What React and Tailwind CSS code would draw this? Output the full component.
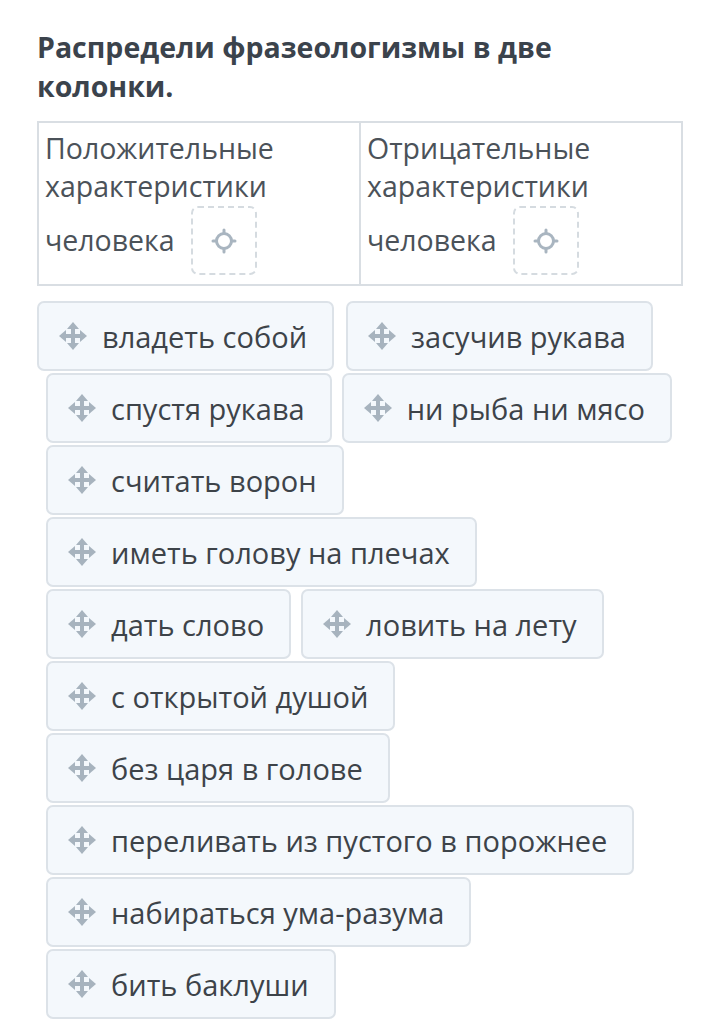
import React from "react";

function MoveIcon() {
  return (
    <svg width="30" height="30" viewBox="0 0 30 30" className="shrink-0">
      <g fill="#a7b3be">
        <rect x="13" y="6" width="4" height="18" rx="1" />
        <rect x="6" y="13" width="18" height="4" rx="1" />
        <polygon points="15,1 9,8 21,8" />
        <polygon points="15,29 9,22 21,22" />
        <polygon points="1,15 8,9 8,21" />
        <polygon points="29,15 22,9 22,21" />
      </g>
    </svg>
  );
}

function CrossHair() {
  return (
    <svg width="28" height="28" viewBox="0 0 28 28">
      <g stroke="#a9b5c0" strokeWidth="3" fill="none" strokeLinecap="round">
        <circle cx="14" cy="14" r="7.5" />
        <line x1="14" y1="3" x2="14" y2="5.5" />
        <line x1="14" y1="22.5" x2="14" y2="25" />
        <line x1="3" y1="14" x2="5.5" y2="14" />
        <line x1="22.5" y1="14" x2="25" y2="14" />
      </g>
    </svg>
  );
}

function Chip({ text }) {
  return (
    <div className="flex h-[70px] items-center rounded-[7px] border-2 border-[#dce2e8] bg-[#f4f8fc] pl-[19px] pr-[25px]">
      <MoveIcon />
      <span className="ml-[14px] whitespace-nowrap text-[29px] leading-none text-[#3d4349]">{text}</span>
    </div>
  );
}

function Cell({ l1, l2, l3, border }) {
  return (
    <div className={"flex-1 px-[6px] pt-[6px] pb-[9px] text-[28.5px] leading-[38px] text-[#4b5259] " + (border ? "border-r-2 border-[#d9dee3]" : "")}>
      <div>{l1}</div>
      <div>{l2}</div>
      <div className="flex items-center">
        <span>{l3}</span>
        <div className="ml-[16px] mt-[1px] flex h-[69px] w-[66px] items-center justify-center rounded-[7px] border-2 border-dashed border-[#d5dbe0]">
          <CrossHair />
        </div>
      </div>
    </div>
  );
}

const rows = [
  ["владеть собой", "засучив рукава"],
  ["спустя рукава", "ни рыба ни мясо"],
  ["считать ворон"],
  ["иметь голову на плечах"],
  ["дать слово", "ловить на лету"],
  ["с открытой душой"],
  ["без царя в голове"],
  ["переливать из пустого в порожнее"],
  ["набираться ума-разума"],
  ["бить баклуши"],
];

export default function App() {
  return (
    <div className="min-h-[1034px] w-[702px] bg-white pt-[28px]" style={{ fontFamily: '"Open Sans", "Noto Sans", sans-serif' }}>
      <div className="pl-[37px] pr-[19px]">
        <h1 className="text-[28.5px] font-bold leading-[39px] text-[#3b434c]">
          Распредели фразеологизмы в две
          <br />
          колонки.
        </h1>
        <div className="mt-[15px] flex w-[646px] border-2 border-[#d9dee3]">
          <Cell l1="Положительные" l2="характеристики" l3="человека" border />
          <Cell l1="Отрицательные" l2="характеристики" l3="человека" />
        </div>
      </div>
      <div className="mt-[15px] flex flex-col gap-[2px]">
        {rows.map((r, i) => (
          <div key={i} className={i === 0 ? "flex gap-[12px] pl-[37px]" : "flex gap-[10px] pl-[46px]"}>
            {r.map((t) => (
              <Chip key={t} text={t} />
            ))}
          </div>
        ))}
      </div>
    </div>
  );
}
